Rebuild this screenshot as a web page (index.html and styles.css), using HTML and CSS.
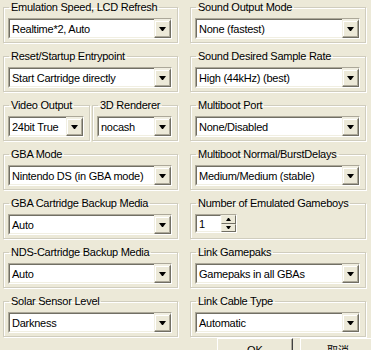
FILE: index.html
```html
<!DOCTYPE html>
<html lang="en">
<head>
    <meta charset="UTF-8">
    <title>Emulation Setup</title>
    <link rel="stylesheet" href="styles.css">
</head>
<body>
    <div class="dialog">
        <div class="grid">
            <fieldset class="group">
                <legend>Emulation Speed, LCD Refresh</legend>
                <div class="combo"><span class="value">Realtime*2, Auto</span><span class="drop"><span class="arrow"></span></span></div>
            </fieldset>
            <fieldset class="group">
                <legend>Sound Output Mode</legend>
                <div class="combo"><span class="value">None (fastest)</span><span class="drop"><span class="arrow"></span></span></div>
            </fieldset>

            <fieldset class="group">
                <legend>Reset/Startup Entrypoint</legend>
                <div class="combo"><span class="value">Start Cartridge directly</span><span class="drop"><span class="arrow"></span></span></div>
            </fieldset>
            <fieldset class="group">
                <legend>Sound Desired Sample Rate</legend>
                <div class="combo"><span class="value">High (44kHz) (best)</span><span class="drop"><span class="arrow"></span></span></div>
            </fieldset>

            <div class="pair">
                <fieldset class="group">
                    <legend>Video Output</legend>
                    <div class="combo"><span class="value">24bit True</span><span class="drop"><span class="arrow"></span></span></div>
                </fieldset>
                <fieldset class="group">
                    <legend>3D Renderer</legend>
                    <div class="combo"><span class="value">nocash</span><span class="drop"><span class="arrow"></span></span></div>
                </fieldset>
            </div>
            <fieldset class="group">
                <legend>Multiboot Port</legend>
                <div class="combo"><span class="value">None/Disabled</span><span class="drop"><span class="arrow"></span></span></div>
            </fieldset>

            <fieldset class="group">
                <legend>GBA Mode</legend>
                <div class="combo"><span class="value">Nintendo DS (in GBA mode)</span><span class="drop"><span class="arrow"></span></span></div>
            </fieldset>
            <fieldset class="group">
                <legend>Multiboot Normal/BurstDelays</legend>
                <div class="combo"><span class="value">Medium/Medium (stable)</span><span class="drop"><span class="arrow"></span></span></div>
            </fieldset>

            <fieldset class="group">
                <legend>GBA Cartridge Backup Media</legend>
                <div class="combo"><span class="value">Auto</span><span class="drop"><span class="arrow"></span></span></div>
            </fieldset>
            <fieldset class="group">
                <legend>Number of Emulated Gameboys</legend>
                <div class="spinner">
                    <span class="spin-value">1</span>
                    <span class="spin-buttons">
                        <span class="spin-btn"><span class="arrow up"></span></span>
                        <span class="spin-btn"><span class="arrow small"></span></span>
                    </span>
                </div>
            </fieldset>

            <fieldset class="group">
                <legend>NDS-Cartridge Backup Media</legend>
                <div class="combo"><span class="value">Auto</span><span class="drop"><span class="arrow"></span></span></div>
            </fieldset>
            <fieldset class="group">
                <legend>Link Gamepaks</legend>
                <div class="combo"><span class="value">Gamepaks in all GBAs</span><span class="drop"><span class="arrow"></span></span></div>
            </fieldset>

            <fieldset class="group">
                <legend>Solar Sensor Level</legend>
                <div class="combo"><span class="value">Darkness</span><span class="drop"><span class="arrow"></span></span></div>
            </fieldset>
            <fieldset class="group">
                <legend>Link Cable Type</legend>
                <div class="combo"><span class="value">Automatic</span><span class="drop"><span class="arrow"></span></span></div>
            </fieldset>
        </div>

        <div class="buttons">
            <button class="btn">OK</button>
            <button class="btn">取消</button>
        </div>
    </div>
</body>
</html>
```

FILE: styles.css
```css
html, body {
    margin: 0;
    overflow: hidden;
}
body {
    background: #ece9d8;
    font-family: "Liberation Sans", Arial, sans-serif;
    font-size: 11px;
    letter-spacing: -0.25px;
    color: #000;
}
.dialog {
    width: 371px;
    height: 350px;
}
.grid {
    display: grid;
    grid-template-columns: 175px 176px;
    grid-auto-rows: 42px;
    column-gap: 12px;
    row-gap: 7px;
    padding: 1px 0 0 3px;
}
.pair {
    display: grid;
    grid-template-columns: 87px 86px;
    column-gap: 2px;
}
.group {
    margin: 0;
    padding: 4px 5px 0 4px;
    min-width: 0;
    border: 1px solid #d0cdbe;
    box-shadow: inset 1px 1px #fff, 1px 1px #fff;
}
.group legend {
    padding: 0 2px;
    margin-left: 1px;
    line-height: 13px;
    white-space: nowrap;
}

/* sunken combobox */
.combo {
    display: flex;
    height: 21px;
    box-sizing: border-box;
    border: 1px solid;
    border-color: #aca899 #fff #fff #aca899;
}
.combo .value {
    flex: 1;
    display: flex;
    align-items: center;
    padding-left: 2px;
    background: #fff;
    border: 1px solid;
    border-right: none;
    border-color: #716f64 #f1efe2 #f1efe2 #716f64;
    white-space: nowrap;
    overflow: hidden;
}
.drop {
    width: 17px;
    box-sizing: border-box;
    display: flex;
    align-items: center;
    justify-content: center;
    background: #ece9d8;
    border: 1px solid;
    border-color: #f1efe2 #716f64 #716f64 #f1efe2;
    border-top: 2px solid #f1efe2;
    box-shadow: inset -1px -1px #aca899, inset 1px 1px #fff;
}
.arrow {
    width: 1px;
    height: 0;
    border-left: 3px solid transparent;
    border-right: 3px solid transparent;
    border-top: 4px solid #000;
}
.arrow.small {
    border-left-width: 2px;
    border-right-width: 2px;
    border-top-width: 3px;
}
.arrow.up {
    border-left-width: 2px;
    border-right-width: 2px;
    border-top: none;
    border-bottom: 3px solid #000;
}

/* up-down spinner */
.spinner {
    display: flex;
    width: 42px;
    height: 19px;
    box-sizing: border-box;
    border: 1px solid;
    border-color: #aca899 #fff #fff #aca899;
}
.spin-value {
    flex: 1;
    display: flex;
    align-items: center;
    padding-left: 2px;
    background: #fff;
    border: 1px solid;
    border-color: #716f64 #fff #f1efe2 #716f64;
}
.spin-buttons {
    width: 15px;
    display: flex;
    flex-direction: column;
}
.spin-btn {
    flex: 1;
    display: flex;
    align-items: center;
    justify-content: center;
    background: #ece9d8;
    box-sizing: border-box;
    border: 1px solid;
    border-color: #f1efe2 #716f64 #716f64 #f1efe2;
}

.buttons {
    display: flex;
    justify-content: flex-end;
    gap: 7px;
    margin: 1px -5px 0 0;
}
.btn {
    width: 76px;
    height: 23px;
    padding: 0;
    background: #ece9d8;
    font-family: "Liberation Sans", "Noto Sans CJK SC", sans-serif;
    font-size: 11px;
    color: #000;
    border: 1px solid;
    border-color: #fff #404040 #404040 #fff;
    box-shadow: inset -1px -1px #aca899;
}
```
